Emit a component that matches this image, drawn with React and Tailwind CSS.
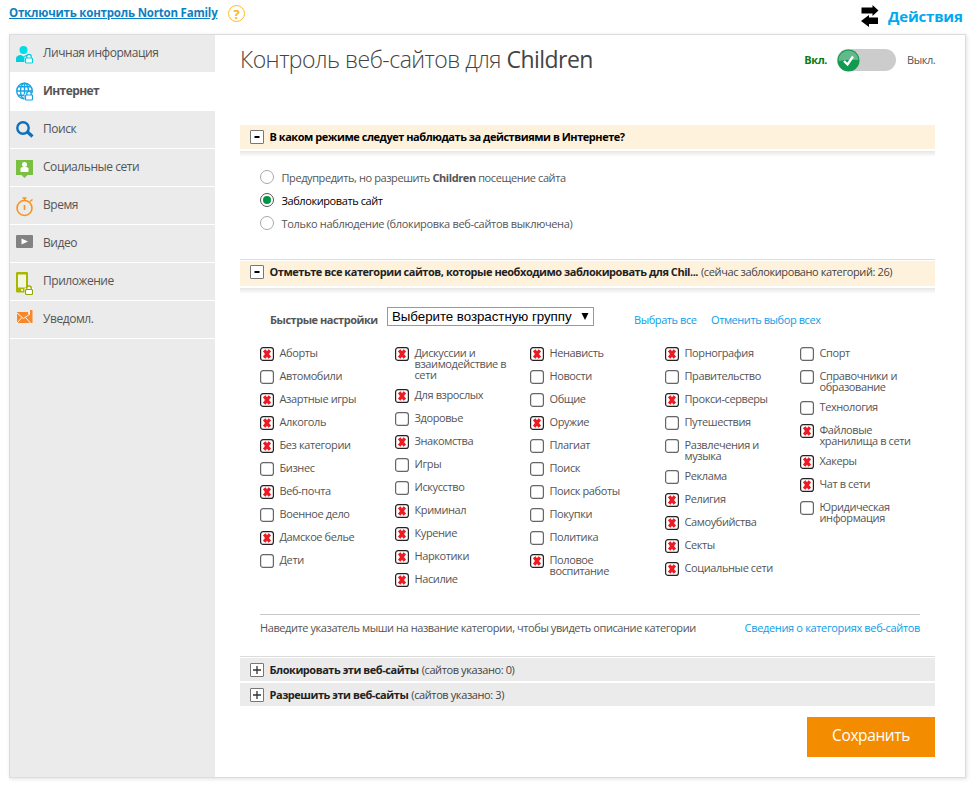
import { useState } from 'react';

const NAV = [
  { id: 'info', label: 'Личная информация' },
  { id: 'web', label: 'Интернет' },
  { id: 'search', label: 'Поиск' },
  { id: 'social', label: 'Социальные сети' },
  { id: 'time', label: 'Время' },
  { id: 'video', label: 'Видео' },
  { id: 'app', label: 'Приложение' },
  { id: 'alerts', label: 'Уведомл.' },
];

const MODES = [
  { id: 'warn', label: <>Предупредить, но разрешить <b>Children</b> посещение сайта</> },
  { id: 'block', label: 'Заблокировать сайт' },
  { id: 'watch', label: 'Только наблюдение (блокировка веб-сайтов выключена)' },
];

// [name, blocked] — "\n" marks a line break in long names
const COLUMNS = [
  [
    ['Аборты', true], ['Автомобили', false], ['Азартные игры', true], ['Алкоголь', true],
    ['Без категории', true], ['Бизнес', false], ['Веб-почта', true], ['Военное дело', false],
    ['Дамское белье', true], ['Дети', false],
  ],
  [
    ['Дискуссии и\nвзаимодействие в\nсети', true], ['Для взрослых', true], ['Здоровье', false],
    ['Знакомства', true], ['Игры', false], ['Искусство', false], ['Криминал', true],
    ['Курение', true], ['Наркотики', true], ['Насилие', true],
  ],
  [
    ['Ненависть', true], ['Новости', false], ['Общие', false], ['Оружие', true],
    ['Плагиат', false], ['Поиск', false], ['Поиск работы', false], ['Покупки', false],
    ['Политика', false], ['Половое\nвоспитание', true],
  ],
  [
    ['Порнография', true], ['Правительство', false], ['Прокси-серверы', true],
    ['Путешествия', false], ['Развлечения и\nмузыка', false], ['Реклама', false],
    ['Религия', true], ['Самоубийства', true], ['Секты', true], ['Социальные сети', true],
  ],
  [
    ['Спорт', false], ['Справочники и\nобразование', false], ['Технология', false],
    ['Файловые\nхранилища в сети', true], ['Хакеры', true], ['Чат в сети', true],
    ['Юридическая\nинформация', false],
  ],
];

function Lock({ x, y, color }) {
  return (
    <g>
      <rect x={x - 1} y={y + 2} width="9" height="7" rx="1" fill="#fff" />
      <path d={`M${x + 1.3} ${y + 3.5}v-1.500a2.200 2.200 0 0 1 4.400 0v1.500`} fill="#fff" stroke={color} strokeWidth="1.300" />
      <rect x={x} y={y + 3.5} width="7" height="5" rx=".8" fill="#fff" stroke={color} strokeWidth="1.200" />
    </g>
  );
}

function NavIcon({ id }) {
  return (
    <svg width="20" height="28" viewBox="0 0 20 28" className="block shrink-0">
      {id === 'info' && (
        <>
          <circle cx="7.500" cy="8" r="4" fill="#00dde6" />
          <path d="M0 20v-3c0-3 2.500-4 5-4l2.500 1.500L10 13c3 0 5 1 5 4v3z" fill="#00cfe0" />
          <Lock x={9.5} y={12.5} color="#00cfe0" />
        </>
      )}
      {id === 'web' && (
        <>
          <g fill="none" stroke="#1ba3e4" strokeWidth="1.400">
            <circle cx="8.500" cy="11" r="7.800" />
            <ellipse cx="8.500" cy="11" rx="4" ry="7.800" />
            <path d="M8.500 3v16M1 11h15M2 6.800h13M2 15.200h13" />
          </g>
          <Lock x={9.5} y={11.5} color="#1ba3e4" />
        </>
      )}
      {id === 'search' && (
        <g fill="none" stroke="#0f6fb8">
          <circle cx="7" cy="10" r="5.700" strokeWidth="2.400" />
          <path d="M11 13.500l5.500 5" strokeWidth="3.200" />
        </g>
      )}
      {id === 'social' && (
        <>
          <path d="M0 4h17v15h-5.500l-3 3-3-3H0z" fill="#7ac143" />
          <circle cx="8.500" cy="8.500" r="2.500" fill="#fff" />
          <path d="M4.500 16v-4l2-1h4l2 1v4z" fill="#fff" />
        </>
      )}
      {id === 'time' && (
        <g fill="none" stroke="#f7931e" strokeWidth="1.600">
          <circle cx="8.500" cy="14" r="7.500" />
          <path d="M8.500 6.500V3.500M6.500 4h4M14 7.500l2.500-2M8.500 11v5" />
        </g>
      )}
      {id === 'video' && (
        <>
          <rect x="0" y="3" width="17" height="13" rx="1" fill="#828282" />
          <path d="M5.500 6.500l6.500 3-6.500 3z" fill="#fff" />
        </>
      )}
      {id === 'app' && (
        <>
          <rect x="0" y="2" width="12" height="20.500" rx="1.200" fill="#a8b800" />
          <rect x="2" y="4.500" width="8" height="13" fill="#f3f6e0" />
          <circle cx="6" cy="20" r="1" fill="#fff" />
          <Lock x={9.5} y={16} color="#96a600" />
        </>
      )}
      {id === 'alerts' && (
        <>
          <path d="M1 4h11v2h2V2h2.500v13H1z" fill="#f7882a" />
          <path d="M1 5l6.500 5.500L14 6M1 15l5-5.500M14.500 15l-5-5.500" fill="none" stroke="#fff" strokeWidth=".9" />
        </>
      )}
    </svg>
  );
}

function SectionHeader({ open, title, note, className }) {
  return (
    <div className={`flex items-center pl-[10px] text-[11px] ${className}`}>
      <span className="flex h-[14px] w-[14px] shrink-0 items-center justify-center rounded-[1px] border border-[#777] bg-white">
        <svg width="8" height="8" viewBox="0 0 8 8">
          {open ? <path d="M1.500 4h5" stroke="#000" strokeWidth="2" /> : <path d="M0 4h8M4 0v8" stroke="#333" strokeWidth="1.300" />}
        </svg>
      </span>
      <span className="ml-[5.5px] pt-[1px] whitespace-nowrap font-bold tracking-[-0.46px]">{title}</span>
      {note && <span className="ml-[3px] pt-[1px] whitespace-nowrap tracking-[-0.39px] text-[#444]">{note}</span>}
    </div>
  );
}

function Category({ name, checked, onToggle }) {
  return (
    <div onClick={onToggle} className="mb-[9px] flex min-h-[14px] cursor-pointer items-start">
      <svg width="14" height="14" viewBox="0 0 14 14" className="shrink-0">
        <rect x=".6" y=".6" width="12.800" height="12.800" rx="2.500" fill="#fff" stroke={checked ? '#222' : '#666'} strokeWidth="1.200" />
        {checked && <path d="M4.200 3.200l5.600 7.600M9.800 3.200l-5.600 7.600" stroke="#ed1c24" strokeWidth="3.200" />}
      </svg>
      <span className="ml-[5.5px] whitespace-pre text-[11px] leading-[11px] tracking-[-0.4px]">{name}</span>
    </div>
  );
}

export default function App() {
  const [columns, setColumns] = useState(COLUMNS);
  const [mode, setMode] = useState('block');

  const toggle = (c, r) => setColumns(columns.map((col, i) =>
    i !== c ? col : col.map((item, j) => (j === r ? [item[0], !item[1]] : item))));
  const setAll = (v) => setColumns(columns.map(col => col.map(([name]) => [name, v])));

  return (
    <div className="h-[786px] w-[975px] overflow-hidden bg-white font-['Open_Sans',sans-serif] text-[#555]">
      {/* Top bar */}
      <div className="flex h-[34px] items-start pl-[9px] pr-[12px]">
        <a className="mt-[4px] w-[209px] whitespace-nowrap text-[11.5px] leading-[18px] font-bold tracking-[-0.2px] text-[#0d7fc2] underline">
          Отключить контроль Norton Family
        </a>
        <span className="mt-[5px] ml-[10px] flex h-[17px] w-[17px] shrink-0 items-center justify-center rounded-full border-[1.5px] border-[#fdbb30] text-[13px] leading-[14px] font-bold text-[#fdb515]">?</span>
        <svg width="19" height="22" viewBox="0 0 19 22" className="mt-[5px] ml-auto">
          <path d="M1.500 2.500h11V0l6 5.500-6 5.500V8.500h-11zM18 12.500V19H9v3l-8-6 8-6v2.500z" fill="#000" />
        </svg>
        <a className="mt-[4px] ml-[9px] w-[75px] whitespace-nowrap text-[15px] leading-[24px] font-bold tracking-[-0.2px] text-[#00a9f0]">Действия</a>
      </div>

      <div className="ml-[9px] flex h-[744px] w-[957px] border border-[#dcdcdc] shadow-[1px_1px_4px_rgba(0,0,0,0.12)]">
        {/* Sidebar */}
        <nav className="w-[205px] shrink-0 bg-[#ebebeb]">
          {NAV.map(({ id, label }) => (
            <div key={id}
              className={`flex h-[38px] items-start border-b border-white pl-[6px] pt-[7px] ${id === 'web' ? 'bg-white' : ''}`}>
              <NavIcon id={id} />
              <span className={`mt-[1px] ml-[7px] whitespace-nowrap text-[12px] leading-[20px] ${id === 'web' ? 'font-bold tracking-[-0.6px]' : 'tracking-[-0.45px]'}`}>{label}</span>
            </div>
          ))}
        </nav>

        {/* Content */}
        <main className="flex w-[720px] flex-col pl-[25px]">
          <div className="flex h-[90px] w-[695px] items-start">
            <h1 className="mt-[8px] whitespace-nowrap text-[23px] leading-[32px] font-light tracking-[-0.52px] text-[#444]">
              Контроль веб-сайтов для <span className="font-normal">Children</span>
            </h1>
            <div className="mt-[14px] ml-auto flex items-start text-[11px] leading-[22px] tracking-[-0.45px]">
              <span className="font-bold text-[#0b7a10]">Вкл.</span>
              <div className="ml-[10px] h-[22px] w-[59px] rounded-full bg-[#ccc]">
                <svg width="23" height="23" viewBox="0 0 23 23">
                  <circle cx="11.500" cy="11.500" r="11" fill="#129a50" />
                  <path d="M1.500 12a10 10 0 0 1 20-1q-10-1-20 1z" fill="#64b98c" />
                  <path d="M7 12l3.500 3.500L16 7.500" fill="none" stroke="#fff" strokeWidth="2.400" />
                </svg>
              </div>
              <span className="ml-[11px] w-[28px]">Выкл.</span>
            </div>
          </div>

          <SectionHeader open title="В каком режиме следует наблюдать за действиями в Интернете?"
            className="h-[24px] w-[695px] bg-[#fff2dc] text-black" />
          <div className="mt-[2px] h-[6px] w-[695px] bg-linear-to-b from-[#e6e6e6] to-white" />

          <div className="mt-[13px] h-[89px] pl-[20px]">
            {MODES.map(({ id, label }) => (
              <div key={id} onClick={() => setMode(id)} className="mb-[9px] flex h-[14px] cursor-pointer items-center text-[11px] leading-[14px]">
                <span className={`flex h-[14px] w-[14px] items-center justify-center rounded-full border ${mode === id ? 'border-[#555]' : 'border-[#aaa]'}`}>
                  {mode === id && <span className="h-[8px] w-[8px] rounded-full bg-[#009245]" />}
                </span>
                <span className={`ml-[7.5px] whitespace-nowrap pt-[2px] ${id === 'watch' ? 'tracking-[-0.33px]' : 'tracking-[-0.41px]'} ${mode === id ? 'text-black' : ''}`}>{label}</span>
              </div>
            ))}
          </div>

          <div className="h-[2px] w-[695px] border-t border-[#dcdcdc]" />
          <SectionHeader open title="Отметьте все категории сайтов, которые необходимо заблокировать для Chil..."
            note="(сейчас заблокировано категорий: 26)"
            className="h-[25px] w-[695px] bg-[#fff2dc] pb-[3px] text-[#222]" />
          <div className="mt-[2px] h-[6px] w-[695px] bg-linear-to-b from-[#e6e6e6] to-white" />

          <div className="mt-[13px] flex h-[40px] items-start pl-[30px] text-[11px] leading-[26px] tracking-[-0.42px]">
            <span className="w-[117px] shrink-0 whitespace-nowrap font-bold tracking-[-0.48px]">Быстрые настройки</span>
            <div className="flex h-[19px] w-[207px] items-center justify-between border border-[#999] bg-white pr-[4px] pl-[4px] font-['Liberation_Sans',sans-serif] text-[13.33px] leading-[17px] tracking-[-0.05px] text-black">
              <span className="whitespace-nowrap">Выберите возрастную группу</span>
              <svg width="8" height="8" viewBox="0 0 8 8" className="mb-[2px] shrink-0"><path d="M.5 1h7L4 8z" fill="#000" /></svg>
            </div>
            <a onClick={() => setAll(true)} className="ml-[40px] w-[62px] cursor-pointer whitespace-nowrap text-[#0a9ee8]">Выбрать все</a>
            <a onClick={() => setAll(false)} className="ml-[15px] cursor-pointer whitespace-nowrap text-[#0a9ee8]">Отменить выбор всех</a>
          </div>

          <div className="flex h-[267px] pl-[20px]">
            {columns.map((col, c) => (
              <div key={c} className="w-[135px] shrink-0">
                {col.map(([name, checked], r) => (
                  <Category key={name} name={name} checked={checked} onToggle={() => toggle(c, r)} />
                ))}
              </div>
            ))}
          </div>

          <div className="ml-[20px] flex h-[42px] w-[660px] items-start justify-between border-t border-[#c8c8c8] pt-[4px] text-[11px] leading-[18px]">
            <span className="tracking-[-0.42px]">Наведите указатель мыши на название категории, чтобы увидеть описание категории</span>
            <a className="tracking-[-0.34px] text-[#0a9ee8]">Сведения о категориях веб-сайтов</a>
          </div>

          <div className="h-[2px] w-[695px] border-t border-[#dcdcdc]" />
          <SectionHeader title="Блокировать эти веб-сайты" note="(сайтов указано: 0)" className="h-[23px] w-[695px] bg-[#ebebeb] pt-[1px] text-[#222]" />
          <SectionHeader title="Разрешить эти веб-сайты" note="(сайтов указано: 3)" className="mt-[2px] h-[23px] w-[695px] bg-[#ebebeb] pt-[1px] text-[#222]" />

          <button className="mt-[11px] ml-[567px] h-[40px] w-[128px] bg-[#f48c00] pb-[3px] text-[15.5px] tracking-[-0.4px] text-white">Сохранить</button>
        </main>
      </div>
    </div>
  );
}
